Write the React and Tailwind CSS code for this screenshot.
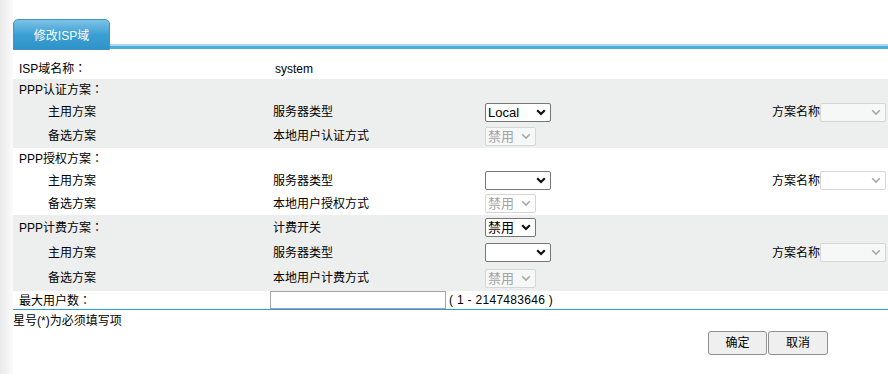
import React from 'react';

const font = { fontFamily: '"Liberation Sans", "Noto Sans CJK SC", sans-serif' };

// full-width colon centred in its box, as in the original page
function Colon() {
  return <span style={{ fontFamily: '"Noto Sans CJK TC", sans-serif' }}>：</span>;
}

function Chevron({ disabled }) {
  return (
    <svg width="10" height="7" viewBox="0 0 10 7" className="shrink-0">
      <polyline
        points="1.2,1.2 5,5 8.8,1.2"
        fill="none"
        stroke={disabled ? '#a8a8a8' : '#111'}
        strokeWidth={disabled ? 1.6 : 2.2}
      />
    </svg>
  );
}

function Select({ wide, text, disabled }) {
  const base = 'flex h-[19px] items-center justify-between rounded-[2px] border pl-[2px] pr-[4px] text-[13px] leading-none';
  const width = wide ? 'w-[66px]' : 'w-[51px]';
  const tone = disabled
    ? 'border-[#d6d6d6] bg-white/50 text-[#a3a3a3]'
    : 'border-[#767676] bg-white text-black';
  return (
    <div className={`${base} ${width} ${tone}`}>
      <span>{text}</span>
      <Chevron disabled={disabled} />
    </div>
  );
}

function Row({ h, label, indent, mid, control, scheme }) {
  return (
    <div className={`grid grid-cols-[257px_215px_1fr_auto] items-center ${h}`}>
      <div className={indent ? 'pl-[35px]' : 'pl-[6px]'}>{label}</div>
      <div className="pl-[3px]">{mid}</div>
      <div>{control}</div>
      <div className="flex items-center pr-[2px]">
        {scheme && (
          <>
            <span>方案名称</span>
            <Select wide text="" disabled />
          </>
        )}
      </div>
    </div>
  );
}

export default function App() {
  return (
    <div className="flex min-h-screen bg-white text-[12px] leading-[14px] text-black" style={font}>
      <div className="w-[13px] shrink-0 bg-gradient-to-r from-[#e9e9e9] to-[#fbfbfb]" />
      <div className="flex flex-1 flex-col">
        <div className="h-[19px]" />
        <div className="flex items-end">
          <div className="flex h-[31px] w-[97px] items-center justify-center rounded-t-[5px] border border-[#3f94c2] bg-gradient-to-b from-[#7cc2e6] via-[#3aa0d4] to-[#2f93c8] pt-[2px] text-white">
            修改ISP域
          </div>
          <div className="mb-[1px] h-[5px] flex-1 border-t-2 border-[#a9d9f0] bg-[#4aaddc]" />
        </div>
        <div className="h-[8px]" />

        <Row h="h-[21px]" label={<>ISP域名称<Colon /></>} mid={<span className="pl-[2px]">system</span>} />

        <div className="bg-[#edeeee]">
          <Row h="h-[21px]" label={<>PPP认证方案<Colon /></>} />
          <Row h="h-[24px]" indent label="主用方案" mid="服务器类型" control={<Select wide text="Local" />} scheme />
          <Row h="h-[24px]" indent label="备选方案" mid="本地用户认证方式" control={<Select text="禁用" disabled />} />
        </div>

        <div>
          <Row h="h-[21px]" label={<>PPP授权方案<Colon /></>} />
          <Row h="h-[23px]" indent label="主用方案" mid="服务器类型" control={<Select wide text="" />} scheme />
          <Row h="h-[23px]" indent label="备选方案" mid="本地用户授权方式" control={<Select text="禁用" disabled />} />
        </div>

        <div className="bg-[#edeeee]">
          <Row h="h-[25px]" label={<>PPP计费方案<Colon /></>} mid="计费开关" control={<Select text="禁用" />} />
          <Row h="h-[25px]" indent label="主用方案" mid="服务器类型" control={<Select wide text="" />} scheme />
          <Row h="h-[26px]" indent label="备选方案" mid="本地用户计费方式" control={<Select text="禁用" disabled />} />
        </div>

        <div className="flex h-[18px] items-center">
          <div className="w-[257px] pl-[6px]">最大用户数<Colon /></div>
          <div className="h-[18px] w-[176px] border border-[#a5a5a5] bg-white" />
          <span className="pl-[3px] tracking-[0.3px]">( 1 - 2147483646 )</span>
        </div>
        <div className="h-px bg-[#2b9ad8]" />

        <div className="pt-[4px]">星号(*)为必须填写项</div>

        <div className="flex pl-[695px] pt-[3px]">
          <button className="h-[24px] w-[59px] rounded-[3px] border border-[#8f8f8f] bg-[#efefef] text-[12px]">确定</button>
          <button className="ml-px h-[24px] w-[60px] rounded-[3px] border border-[#8f8f8f] bg-[#efefef] text-[12px]">取消</button>
        </div>
      </div>
    </div>
  );
}
